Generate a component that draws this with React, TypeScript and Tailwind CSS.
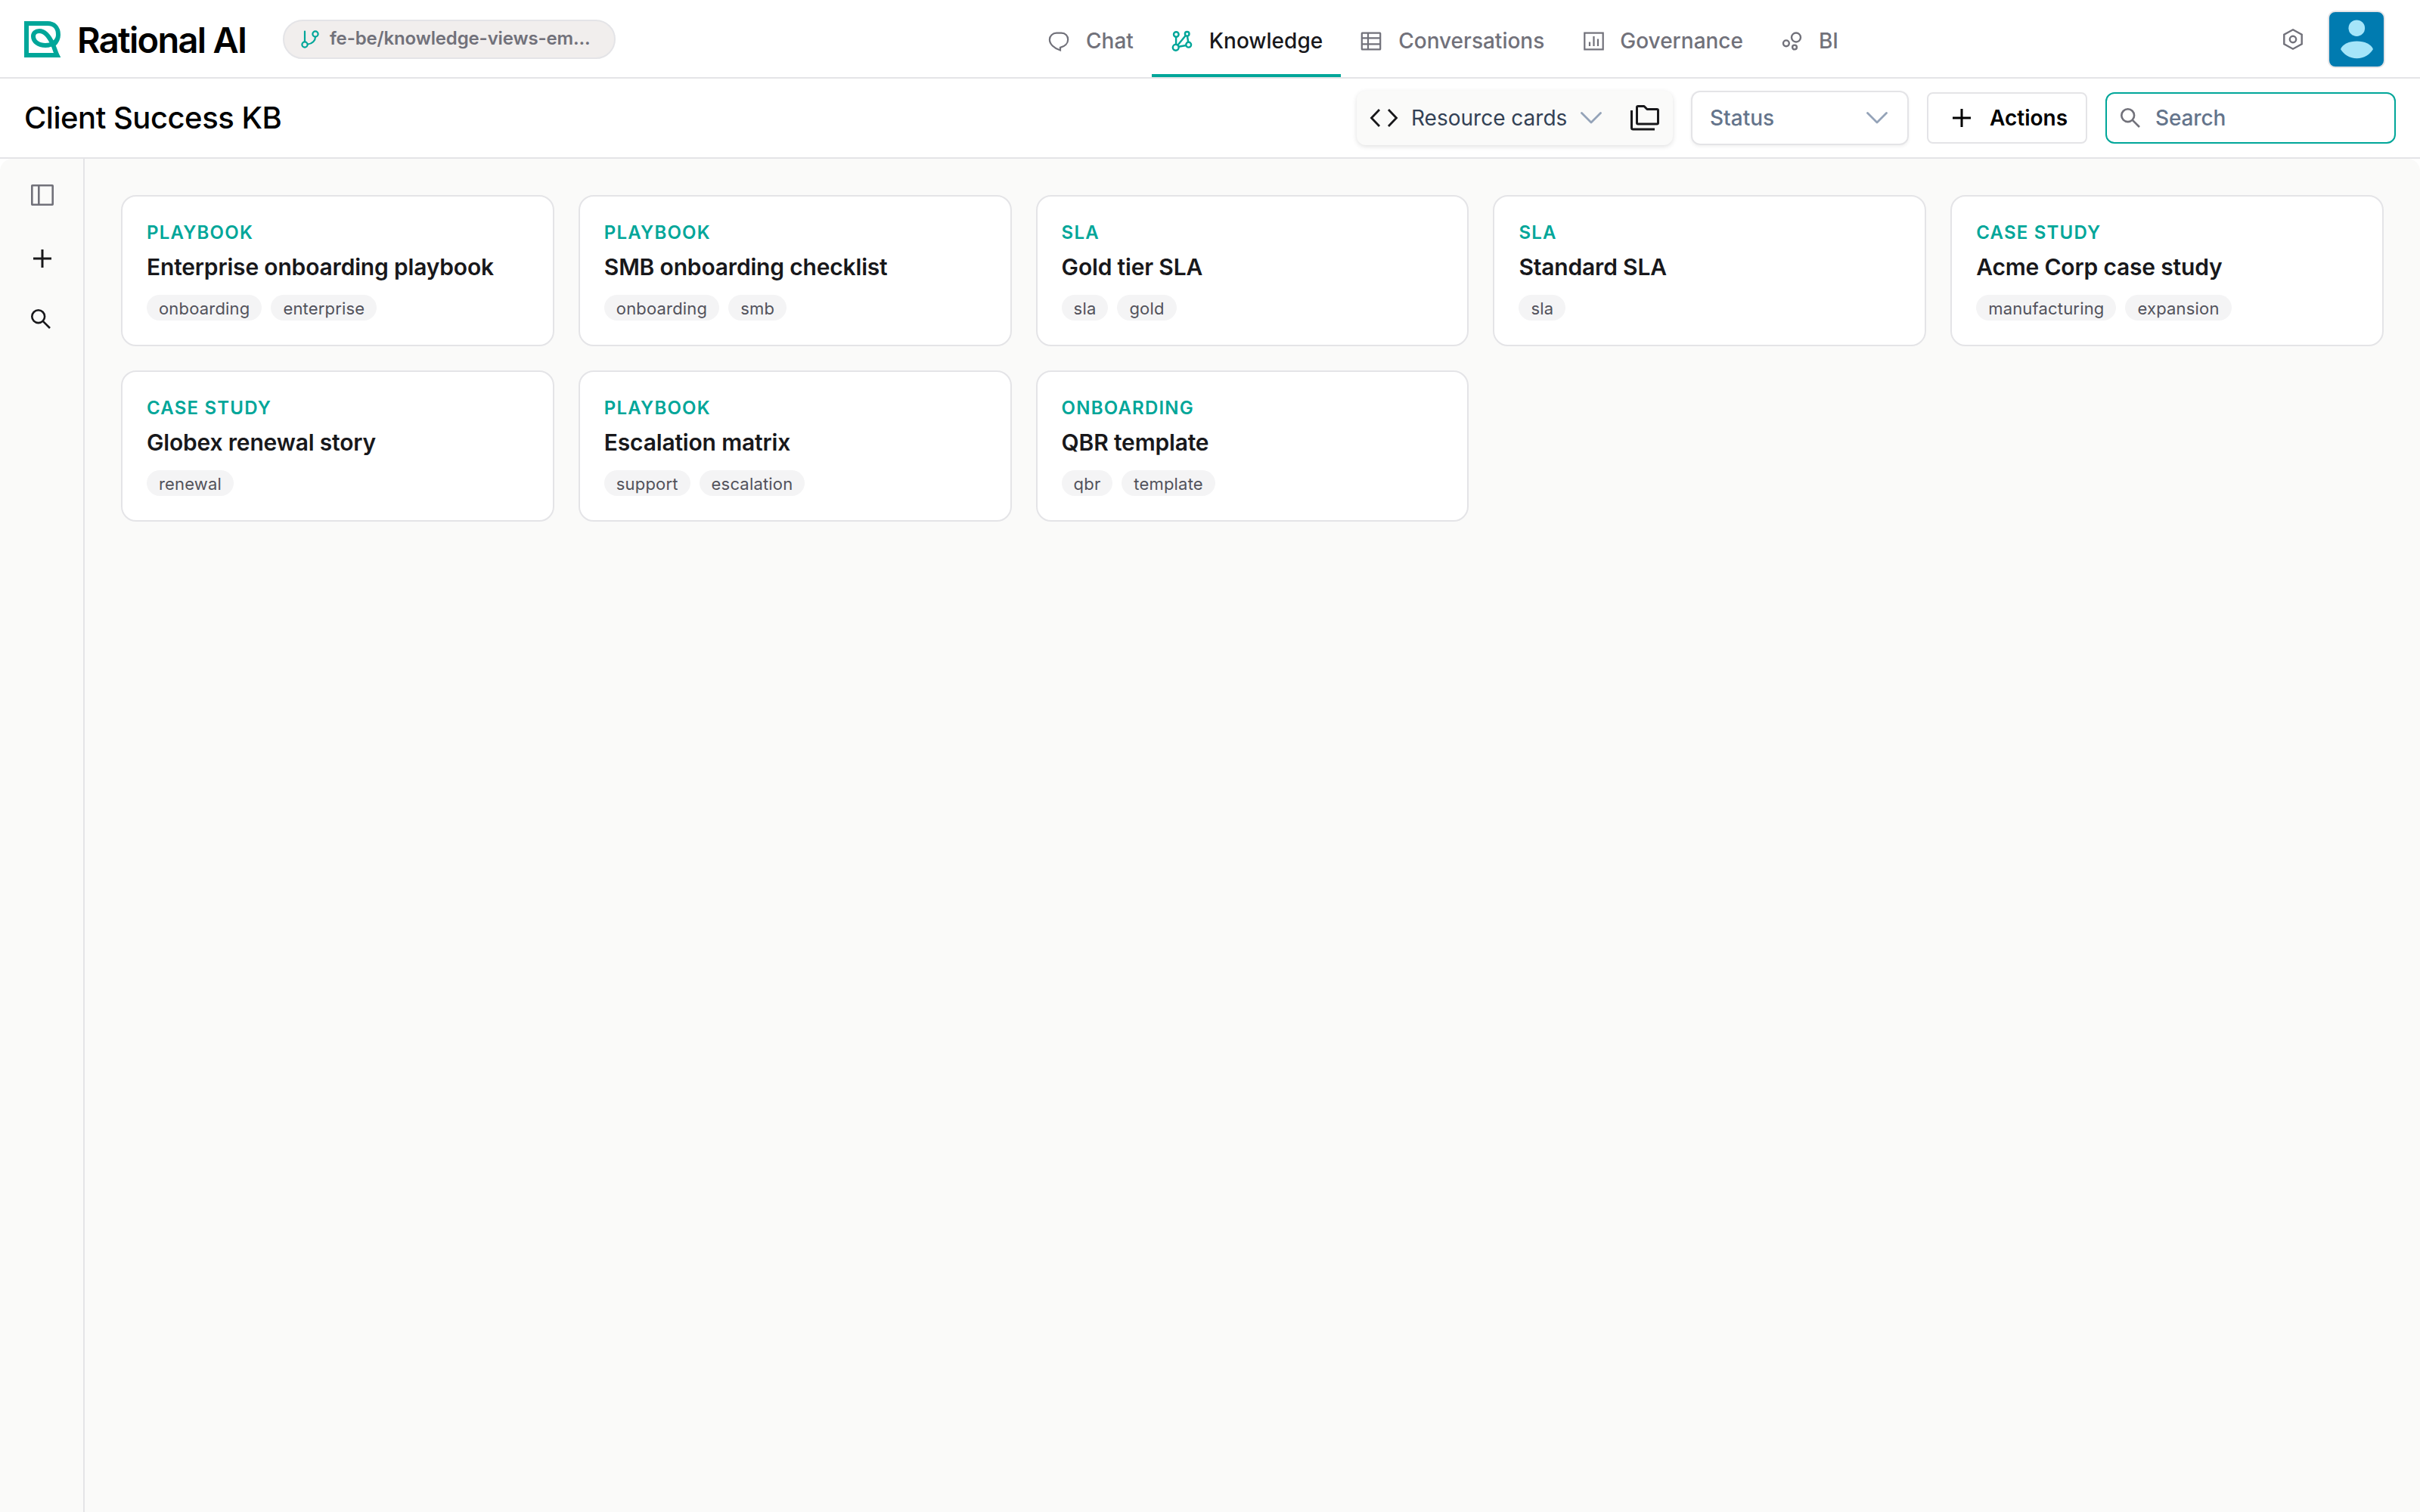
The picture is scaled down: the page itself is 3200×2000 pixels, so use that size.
import clsx from 'clsx';
import { ReactNode } from 'react';

type IconProps = { className?: string };

const LogoMark = ({ className }: IconProps) => (
  <svg viewBox="0 0 48 48" fill="none" stroke="currentColor" strokeWidth="6" className={className}>
    <path d="M39 31 C43 27 45 23 45 18 C45 8 39 3 31 3 H3 V45 H43.5 C41 40 40 35 38 31 C34 22 28 13 20 13 C15 13 12 16 12 20 C12 27 19 32 28 32 C38 32 45 26 45 18" />
  </svg>
);

const BranchIcon = ({ className }: IconProps) => (
  <svg viewBox="0 0 24 24" fill="none" stroke="currentColor" strokeWidth="2.2" strokeLinecap="round" className={className}>
    <path d="M5 1.5V15M9 18.5C15 18 19 13.5 19 9" />
    <circle cx="5" cy="19" r="3.6" />
    <circle cx="19" cy="5" r="3.6" />
  </svg>
);

const ChatIcon = ({ className }: IconProps) => (
  <svg viewBox="0 0 32 32" fill="none" stroke="currentColor" strokeWidth="2.2" className={className}>
    <path d="M13 5.7H19.5C25 5.7 28.2 9.5 28.2 14.2C28.2 19.5 24 23.5 18 24.8V28.5C10 26 3.9 20.5 3.9 14.2C3.9 9.5 8 5.7 13 5.7Z" />
  </svg>
);

const GraphIcon = ({ className }: IconProps) => (
  <svg viewBox="0 0 32 32" fill="none" stroke="currentColor" strokeWidth="2.4" className={className}>
    <circle cx="8.3" cy="7.5" r="3.3" />
    <circle cx="22.7" cy="6.8" r="2.8" />
    <circle cx="7.7" cy="24.8" r="3.9" />
    <circle cx="24.7" cy="21.2" r="3.4" />
    <path d="M8.1 11V21M20.8 9L10.3 21.7M23 9.8L24.2 17.8M11.5 23.8L21.4 22" />
  </svg>
);

const TableIcon = ({ className }: IconProps) => (
  <svg viewBox="0 0 32 32" fill="none" stroke="currentColor" strokeWidth="2.2" className={className}>
    <rect x="3.8" y="5.6" width="24.4" height="21.8" rx="0.5" />
    <path d="M4 12.3H28M4 20.3H28M12 5.6V27.4" />
  </svg>
);

const ChartIcon = ({ className }: IconProps) => (
  <svg viewBox="0 0 32 32" fill="none" stroke="currentColor" strokeWidth="2.2" className={className}>
    <rect x="5.3" y="5.6" width="24.4" height="21.8" />
    <path d="M12 17.5V23M17.5 10V23M23 13.5V23" />
  </svg>
);

const BubblesIcon = ({ className }: IconProps) => (
  <svg viewBox="0 0 32 32" fill="none" stroke="currentColor" strokeWidth="2.4" className={className}>
    <circle cx="22" cy="11.5" r="6" />
    <circle cx="8.9" cy="19.3" r="3.9" />
    <circle cx="20" cy="24.5" r="2.9" />
  </svg>
);

const GearIcon = ({ className }: IconProps) => (
  <svg viewBox="0 0 32 32" fill="none" stroke="currentColor" strokeWidth="2.4" className={className}>
    <path d="M16 3.3L27.7 9.7V22.3L16 28.7L4.3 22.3V9.7Z" />
    <circle cx="16" cy="16" r="4.2" />
  </svg>
);

const CodeIcon = ({ className }: IconProps) => (
  <svg viewBox="0 0 40 24" fill="none" stroke="currentColor" strokeWidth="2.8" className={className}>
    <path d="M14 1L3.5 12L14 23M26 1L36.5 12L26 23" />
  </svg>
);

const ChevronIcon = ({ className }: IconProps) => (
  <svg viewBox="0 0 28 28" fill="none" stroke="currentColor" strokeWidth="2.8" strokeLinecap="round" strokeLinejoin="round" className={className}>
    <path d="M1.5 7.5L14 20L26.5 7.5" />
  </svg>
);

const FoldersIcon = ({ className }: IconProps) => (
  <svg viewBox="0 0 40 40" fill="none" stroke="currentColor" strokeWidth="3" strokeLinejoin="round" className={className}>
    <path d="M9.5 6Q9.5 4.500 11 4.500H19L23 8.500H36Q37.500 8.500 37.500 10V26.500Q37.500 28 36 28H11Q9.500 28 9.500 26.500Z" />
    <path d="M2.500 10V33Q2.500 35 4.500 35H33" />
  </svg>
);

const PlusIcon = ({ className }: IconProps) => (
  <svg viewBox="0 0 24 24" fill="none" stroke="currentColor" strokeWidth="3" className={className}>
    <path d="M12 0V24M0 12H24" />
  </svg>
);

const SearchIcon = ({ className }: IconProps) => (
  <svg viewBox="0 0 26 26" fill="none" stroke="currentColor" strokeWidth="2.6" className={className}>
    <circle cx="9.7" cy="9.7" r="8.4" />
    <path d="M15.8 15.8L25 25" />
  </svg>
);

const PanelIcon = ({ className }: IconProps) => (
  <svg viewBox="0 0 30 28" fill="none" stroke="currentColor" strokeWidth="2.6" className={className}>
    <rect x="1.3" y="1.3" width="27.4" height="25.4" rx="0.5" />
    <path d="M10.3 1V27" />
  </svg>
);

const Avatar = () => (
  <div className="size-[76px] overflow-hidden rounded-[10px] border-2 border-[#e4e4e7] bg-[#007bb0]">
    <svg viewBox="0 0 72 72" fill="#a5e5f9" className="size-[72px]">
      <circle cx="36.3" cy="21.2" r="10.8" />
      <path d="M15 49C18 42.5 26 38.6 36.5 38.6C47 38.6 55 42.5 58 49C54 56 46 61.2 36.5 61.2C27 61.2 19 56 15 49Z" />
    </svg>
  </div>
);

const tabs: { label: string; icon: ReactNode; active?: boolean }[] = [
  { label: 'Chat', icon: <ChatIcon className="size-8" /> },
  { label: 'Knowledge', icon: <GraphIcon className="size-8 text-[#00a699]" />, active: true },
  { label: 'Conversations', icon: <TableIcon className="size-8" /> },
  { label: 'Governance', icon: <ChartIcon className="size-8" /> },
  { label: 'BI', icon: <BubblesIcon className="size-8" /> },
];

const resources = [
  { type: 'Playbook', title: 'Enterprise onboarding playbook', tags: ['onboarding', 'enterprise'] },
  { type: 'Playbook', title: 'SMB onboarding checklist', tags: ['onboarding', 'smb'] },
  { type: 'SLA', title: 'Gold tier SLA', tags: ['sla', 'gold'] },
  { type: 'SLA', title: 'Standard SLA', tags: ['sla'] },
  { type: 'Case study', title: 'Acme Corp case study', tags: ['manufacturing', 'expansion'] },
  { type: 'Case study', title: 'Globex renewal story', tags: ['renewal'] },
  { type: 'Playbook', title: 'Escalation matrix', tags: ['support', 'escalation'] },
  { type: 'Onboarding', title: 'QBR template', tags: ['qbr', 'template'] },
];

const Header = () => (
  <header className="flex h-[104px] border-b-2 border-[#e4e4e7] bg-white">
    <div className="flex w-[1360px] items-center pt-0.5 pl-8">
      <LogoMark className="size-12 text-[#00a699]" />
      <span className="ml-[22px] w-[252px] pt-0.5 text-[47px] leading-[56px] font-semibold tracking-[-0.036em] whitespace-nowrap text-black">Rational AI</span>
      <div className="ml-5 flex h-[52px] w-[440px] items-center rounded-full border-2 border-[#e4e4e7] bg-[#f1eeed] pl-[22px]">
        <BranchIcon className="size-6 text-[#00a699]" />
        <span className="ml-[14px] pb-0.5 text-2xl font-semibold tracking-[-0.006em] whitespace-nowrap text-[#71717a]">fe-be/knowledge-views-em...</span>
      </div>
    </div>
    <nav className="flex">
      {tabs.map((tab) => (
        <button
          key={tab.label}
          className={clsx(
            'flex items-center gap-5 border-b-4 px-6 pt-[9px] text-[28px] font-medium',
            tab.active ? 'border-[#00a699] text-[#18181b]' : 'border-transparent text-[#71717a]'
          )}
        >
          {tab.icon}
          {tab.label}
        </button>
      ))}
    </nav>
    <div className="ml-auto flex items-center gap-[30px] pt-0.5 pr-[46px]">
      <GearIcon className="size-8 text-[#71717a]" />
      <Avatar />
    </div>
  </header>
);

const Toolbar = () => (
  <div className="flex h-[106px] items-center justify-between border-b-2 border-[#e4e4e7] bg-white px-8">
    <h1 className="text-[40px] font-medium tracking-[-0.012em] text-black">Client Success KB</h1>
    <div className="flex items-center gap-6">
      <div className="flex h-[72px] w-[418px] items-center rounded-xl bg-[#fafaf9] pl-4 shadow-[0_2px_6px_rgba(0,0,0,0.12)]">
        <CodeIcon className="h-6 w-10 text-[#18181b]" />
        <span className="ml-4 text-[28px] text-[#334155]">Resource cards</span>
        <ChevronIcon className="ml-[18px] size-7 text-[#94a3b8]" />
        <FoldersIcon className="ml-[37px] size-10 text-[#18181b]" />
      </div>
      <div className="flex h-[72px] w-[288px] items-center justify-between rounded-xl border-2 border-[#e4e4e7] bg-white pr-[26px] pl-[23px] shadow-[0_2px_4px_rgba(0,0,0,0.06)]">
        <span className="text-[28px] font-medium text-[#64748b]">Status</span>
        <ChevronIcon className="size-7 text-[#94a3b8]" />
      </div>
      <button className="flex h-[68px] w-[212px] items-center rounded-lg border-2 border-[#e4e4e7] bg-white pl-8 text-[28px] font-semibold text-black">
        <PlusIcon className="mr-[25px] size-6" />
        Actions
      </button>
      <div className="flex h-[68px] w-[384px] items-center rounded-xl border-2 border-[#00a699] bg-white pl-[18px]">
        <SearchIcon className="size-[26px] text-[#71717a]" />
        <span className="ml-5 text-[28px] font-medium tracking-[-0.005em] text-[#64748b]">Search</span>
      </div>
    </div>
  </div>
);

const SideRail = () => (
  <aside className="flex w-28 flex-col border-r-2 border-[#e4e4e7] pt-[34px] pl-[41px]">
    <PanelIcon className="h-7 w-[30px] text-[#71717a]" />
    <PlusIcon className="mt-[58px] ml-[3px] size-6 text-[#18181b]" />
    <SearchIcon className="mt-[55px] size-[26px] text-[#18181b]" />
  </aside>
);

const App = () => {
  return (
    <div className="flex h-[2000px] w-[3200px] flex-col bg-white font-['Inter',sans-serif]">
      <Header />
      <Toolbar />
      <div className="flex flex-1 rounded-t-2xl bg-[#fafaf9]">
        <SideRail />
        <main className="grid flex-1 auto-rows-[200px] grid-cols-5 gap-8 p-12">
          {resources.map((item) => (
            <article key={item.title} className="rounded-[20px] border-2 border-[#e4e4e7] bg-white p-8">
              <p className="text-2xl leading-8 font-semibold tracking-[0.05em] text-[#00a699] uppercase">{item.type}</p>
              <h2 className="mt-2 text-[30px] leading-[43px] font-semibold tracking-[-0.006em] text-[#18181b]">{item.title}</h2>
              <div className="mt-[15px] flex gap-3">
                {item.tags.map((tag) => (
                  <span key={tag} className="h-[34px] rounded-full bg-[#f4f4f5] px-4 text-[22px] leading-[36px] tracking-[0.008em] text-[#52525b]">{tag}</span>
                ))}
              </div>
            </article>
          ))}
        </main>
      </div>
    </div>
  );
};

export default App;
